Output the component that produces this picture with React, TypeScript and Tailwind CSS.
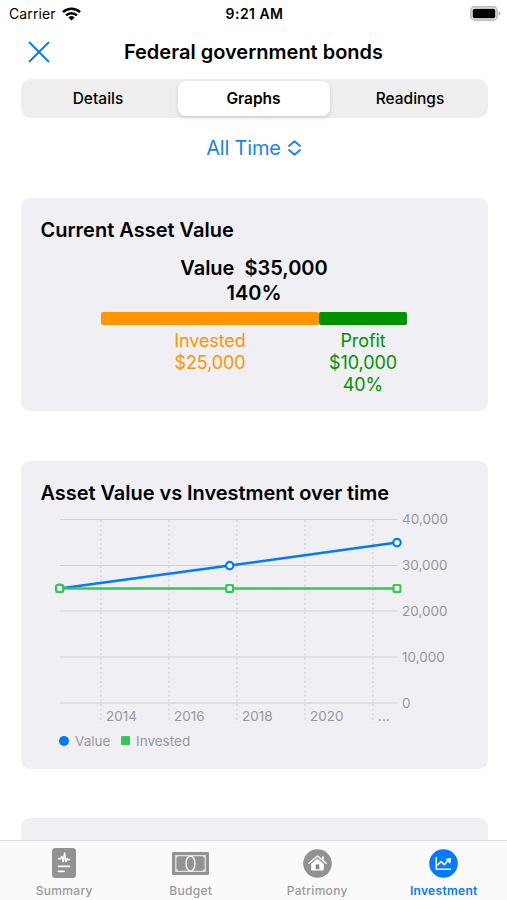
import { ReactElement, ReactNode } from "react"

type Tab = {
  name: string
  icon: ReactNode
  active?: boolean
}

const segments = ["Details", "Graphs", "Readings"]

const yAxis = [
  { label: "40,000", y: 9.5 },
  { label: "30,000", y: 55.5 },
  { label: "20,000", y: 101 },
  { label: "10,000", y: 147 },
  { label: "0", y: 193 },
]

const xAxis = [
  { label: "2014", x: 60 },
  { label: "2016", x: 128 },
  { label: "2018", x: 196 },
  { label: "2020", x: 264 },
  { label: "...", x: 332 },
]

const valuePoints = [
  { x: 18.7, y: 78.4 },
  { x: 188.7, y: 55.6 },
  { x: 356, y: 32.6 },
]

const investedPoints = [
  { x: 18.7, y: 78.4 },
  { x: 188.7, y: 78.4 },
  { x: 356, y: 78.4 },
]

const toPoints = (points: { x: number; y: number }[]) => points.map(({ x, y }) => `${x},${y}`).join(" ")

const tabs: Tab[] = [
  {
    name: "Summary",
    icon: (
      <svg width="24" height="30" viewBox="0 0 24 30" fill="none" strokeLinecap="round" strokeLinejoin="round">
        <rect width="24" height="30" rx="3.5" fill="#929292" />
        <path d="M6.500 10.800h2l1.400-2.400 1.300 5.200L12.600 5l1.300 8.600 1.500-3 .8.800h1.300" stroke="#fff" strokeWidth="1.500" />
        <path d="M6.500 18.300h11M6.500 23.300h5.600" stroke="#fff" strokeWidth="1.700" />
      </svg>
    ),
  },
  {
    name: "Budget",
    icon: (
      <svg width="37" height="23" viewBox="0 0 37 23">
        <rect width="37" height="23" rx="1.200" fill="#929292" />
        <path d="M3.800 3.600h29.400v15.800H3.800Z" fill="none" stroke="#e2e2e2" strokeWidth="1.300" />
        <path d="M3.800 3.600h2.400a2.400 2.400 0 0 1-2.400 2.400ZM33.200 3.600h-2.400a2.400 2.400 0 0 0 2.400 2.400ZM3.800 19.400h2.400a2.400 2.400 0 0 0-2.400-2.400ZM33.200 19.400h-2.400a2.400 2.400 0 0 1 2.400-2.400Z" fill="#e2e2e2" />
        <ellipse cx="18.500" cy="11.500" rx="4.500" ry="7.600" fill="#929292" stroke="#f3f3f3" strokeWidth="1.500" />
      </svg>
    ),
  },
  {
    name: "Patrimony",
    icon: (
      <svg width="29" height="29" viewBox="0 0 29 29">
        <circle cx="14.500" cy="14.500" r="14.300" fill="#929292" />
        <path d="M6 14.300 14.500 7l8.500 7.300" fill="none" stroke="#fff" strokeWidth="1.400" strokeLinecap="round" strokeLinejoin="round" />
        <path d="M19 7.500h2v3.700l-2-1.700Z" fill="#fff" />
        <path d="M8.200 14.900 14.500 9.500l6.300 5.400v5.500q0 1-1 1H9.200q-1 0-1-1Z" fill="#fff" />
        <rect x="12.700" y="15.400" width="3.600" height="4.800" fill="#858585" />
      </svg>
    ),
  },
  {
    name: "Investment",
    active: true,
    icon: (
      <svg width="29" height="29" viewBox="0 0 29 29" fill="none" stroke="#fff" strokeLinecap="round" strokeLinejoin="round">
        <circle cx="14.500" cy="14.500" r="14.300" fill="#007aff" stroke="none" />
        <path d="M7.300 8.500v11.800h14.200" strokeWidth="1.500" />
        <path d="m8.800 15.800 3.400-3.300 3 3.200 3.700-3.900" strokeWidth="1.600" />
        <path d="m17.200 10.300 4.600-1-.8 4.600Z" fill="#fff" strokeWidth=".8" />
      </svg>
    ),
  },
]

const StatusBar = (): ReactElement => (
  <div className="grid grid-cols-3 items-center h-[27px] pl-[9px] pr-[7px] text-[14px]">
    <div className="flex items-center gap-[6px] tracking-[0.1px]">
      Carrier
      <svg width="19" height="14" viewBox="0 0 19 14" fill="none" stroke="#000" strokeWidth="2.500">
        <path d="M1 5.200a12.300 12.300 0 0 1 17 0" />
        <path d="M4 8.400a8 8 0 0 1 11 0" />
        <path d="M9.500 13.600 6.400 10.500a4.500 4.500 0 0 1 6.200 0Z" fill="#000" stroke="none" />
      </svg>
    </div>
    <span className="text-center font-semibold tracking-[0.450px]">9:21 AM</span>
    <svg className="justify-self-end -mr-[1px]" width="31" height="15" viewBox="0 0 31 15">
      <rect x=".9" y=".9" width="26.200" height="13.200" rx="3.800" fill="#fff" stroke="#bdbdbd" strokeWidth="1.700" />
      <rect x="2.700" y="2.700" width="22.600" height="9.600" rx="1.800" fill="#000" />
      <path d="M28.600 5.200q1.900.6 1.900 2.300t-1.900 2.300Z" fill="#b4b4b4" />
    </svg>
  </div>
)

const AssetValueCard = (): ReactElement => (
  <section className="h-[213px] px-5 pt-[18px] bg-[#efeff4] rounded-[9px]">
    <h2 className="text-[20px] leading-7 font-semibold">Current Asset Value</h2>
    <div className="mt-[12px] text-center text-[20px] leading-[25px] font-semibold">
      <p className="whitespace-pre">Value  $35,000</p>
      <p>140%</p>
    </div>
    <div className="flex w-[306px] mx-auto mt-[6px] text-center text-[18px] leading-[22px] tracking-[-0.100px]">
      <div className="w-[218px] text-[#ff9500]">
        <div className="h-[13px] mb-[5px] bg-[#ff9500] rounded-[2px]" />
        <p>Invested</p>
        <p>$25,000</p>
      </div>
      <div className="w-[88px] text-[#009300]">
        <div className="h-[13px] mb-[5px] bg-[#009300] rounded-[2px]" />
        <p>Profit</p>
        <p>$10,000</p>
        <p>40%</p>
      </div>
    </div>
  </section>
)

const InvestmentChart = (): ReactElement => (
  <svg className="block" width="427" height="218" viewBox="0 0 427 218" fill="none">
    {yAxis.map(({ label, y }) => (
      <g key={label}>
        <path d={`M19 ${y}H356`} stroke="#d0d0d5" strokeWidth="1.200" />
        <text x="361" y={y + 4.7} fill="#98989d" className="text-[13.500px]">{label}</text>
      </g>
    ))}
    {xAxis.map(({ label, x }) => (
      <g key={label}>
        <path d={`M${x} 10V213`} stroke="#d0d0d5" strokeWidth="1.200" strokeDasharray="2 2.600" />
        <text x={x + 5} y="211" fill="#98989d" className="text-[13.500px]">{label}</text>
      </g>
    ))}
    <polyline points={toPoints(valuePoints)} stroke="#007aff" strokeWidth="2.500" />
    {valuePoints.map(({ x, y }) => (
      <circle key={x} cx={x} cy={y} r="3.700" fill="#fff" stroke="#007aff" strokeWidth="2.200" />
    ))}
    <polyline points={toPoints(investedPoints)} stroke="#34c759" strokeWidth="2.500" />
    {investedPoints.map(({ x, y }) => (
      <rect key={x} x={x - 3.4} y={y - 3.4} width="6.800" height="6.800" rx=".6" fill="#fff" stroke="#34c759" strokeWidth="2.200" />
    ))}
  </svg>
)

const ChartCard = (): ReactElement => (
  <section className="h-[308px] px-5 pt-[18px] bg-[#efeff4] rounded-[9px]">
    <h2 className="text-[20px] leading-7 font-semibold tracking-[-0.050px]">Asset Value vs Investment over time</h2>
    <div className="mt-[3px]">
      <InvestmentChart />
    </div>
    <div className="flex items-center mt-[3px] pl-[18.500px] text-[13.500px] leading-5 text-[#98989d]">
      <span className="size-[10px] mr-[6px] bg-[#007aff] rounded-full" />
      <span className="w-[46px]">Value</span>
      <span className="size-[9px] mr-[6px] bg-[#34c759] rounded-[1px]" />
      <span>Invested</span>
    </div>
  </section>
)

const TabBar = ({ tabs }: { tabs: Tab[] }): ReactElement => (
  <nav className="grid grid-cols-4 h-[60px] shrink-0 pl-[1px] bg-[#fafafb] border-t border-[#d9d9db]">
    {tabs.map(({ name, icon, active }) => (
      <button key={name} type="button" className={`flex flex-col items-center text-[12px] ${active ? "font-semibold text-[#007aff]" : "font-medium text-[#999999]"}`}>
        <span className="flex items-center h-[30px] mt-[7px]">{icon}</span>
        <span className="mt-[5px] leading-4 tracking-[0.300px]">{name}</span>
      </button>
    ))}
  </nav>
)

const App = (): ReactElement => {
  return (
    <div className="flex flex-col w-[507px] h-[900px] overflow-hidden bg-white text-black font-['Inter','Liberation_Sans',sans-serif]">
      <StatusBar />
      <header className="grid grid-cols-[38px_1fr_36px] items-center h-[49px] px-5">
        <button type="button" aria-label="Close" className="flex justify-center">
          <svg width="22" height="22" viewBox="0 0 22 22" stroke="#007aff" strokeWidth="1.900" strokeLinecap="round">
            <path d="m1.500 1.500 19 19M20.500 1.500l-19 19" />
          </svg>
        </button>
        <h1 className="pr-[2px] text-center text-[20px] font-semibold">Federal government bonds</h1>
      </header>
      <main className="flex-1 min-h-0 overflow-hidden pl-[20.500px] pr-[19.500px] pt-[3px]">
        <div className="grid grid-cols-3 gap-[5px] h-[39px] p-[2px] bg-[#eeeeef] rounded-[10px] text-[15.500px] font-medium">
          {segments.map((name) => (
            <button key={name} type="button" className={`rounded-[8px] ${name === "Graphs" ? "-ml-[1px] bg-white font-semibold shadow-[0_2px_4px_rgba(0,0,0,0.14)]" : ""}`}>
              {name}
            </button>
          ))}
        </div>
        <div className="flex items-center justify-center gap-[7px] h-[60px] pr-[1px] text-[20px] tracking-[-0.200px] text-[#1a82f7]">
          All Time
          <svg width="13" height="16" viewBox="0 0 13 16" fill="none" stroke="currentColor" strokeWidth="1.900" strokeLinecap="round" strokeLinejoin="round">
            <path d="m1 6 5.500-4.800L12 6M1 10l5.500 4.800L12 10" />
          </svg>
        </div>
        <div className="flex flex-col gap-[49.600px] pt-[20px]">
          <AssetValueCard />
          <ChartCard />
          <section className="h-[213px] bg-[#efeff4] rounded-[9px]" />
        </div>
      </main>
      <TabBar tabs={tabs} />
    </div>
  )
}

export default App
